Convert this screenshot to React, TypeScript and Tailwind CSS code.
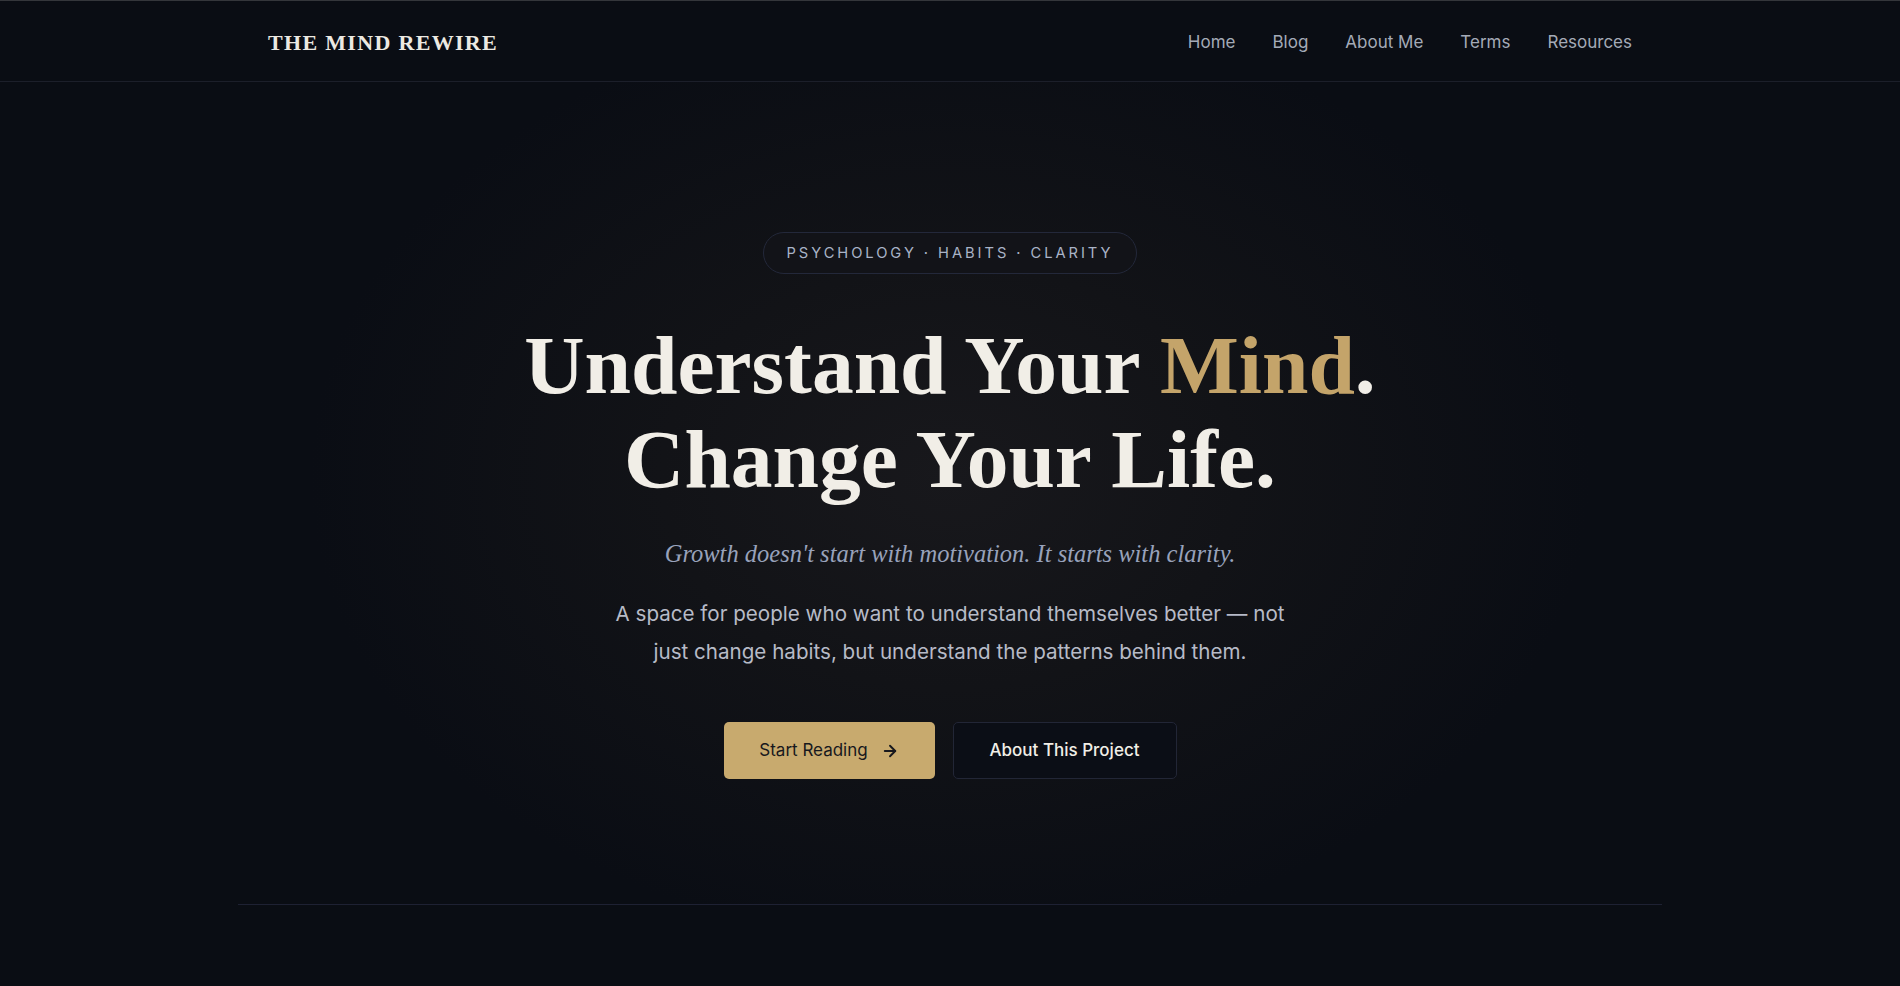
import { ArrowRight } from 'lucide-react';

const navLinks = ['Home', 'Blog', 'About Me', 'Terms', 'Resources'];

export default function App() {
  return (
    <div className="min-h-[986px] bg-[#0a0d14] border-t border-[#34363b] font-['Inter',sans-serif]">
      <header className="h-[81px] border-b border-[#1c1f2a] bg-[#0a0d14]">
        <div className="max-w-[1364px] mx-auto h-full flex items-center justify-between pt-[2px]">
          <span className="font-['Liberation_Serif',serif] font-bold text-[22px] tracking-[0.06em] text-[#ece9e2]">
            THE MIND REWIRE
          </span>
          <nav className="flex items-center gap-[37px] pt-[2px]">
            {navLinks.map((l) => (
              <a key={l} className="text-[17px] text-[#a4aab7]">
                {l}
              </a>
            ))}
          </nav>
        </div>
      </header>

      <section className="bg-[radial-gradient(ellipse_640px_470px_at_50%_48%,#18181c_0%,#121317_45%,#0a0d14_100%)] pt-[150px] pb-[125px] flex flex-col items-center">
        <div className="h-[42px] px-[23px] flex items-center rounded-full border border-[#23283a] bg-[#121318]">
          <span className="text-[14.7px] tracking-[0.2em] text-[#a9b3c7]">
            PSYCHOLOGY · HABITS · CLARITY
          </span>
        </div>

        <h1 className="mt-[44px] text-center font-['Liberation_Serif',serif] font-bold text-[83.5px] leading-[94px] text-[#f1eee7]">
          Understand Your <span className="text-[#c4a46a]">Mind</span>.
          <br />
          Change Your Life.
        </h1>

        <p className="mt-8 font-['Liberation_Serif',serif] italic text-[24.5px] leading-[32px] text-[#98a2bb]">
          Growth doesn't start with motivation. It starts with clarity.
        </p>

        <p className="mt-[25px] max-w-[760px] text-center text-[20.6px] leading-[38px] text-[#b7bbc7]">
          A space for people who want to understand themselves better — not
          <br />
          just change habits, but understand the patterns behind them.
        </p>

        <div className="mt-[51px] flex items-center gap-[18px]">
          <button className="h-[57px] w-[211px] rounded-[5px] bg-[#c8aa6e] flex items-center justify-center gap-[13px] text-[17px] text-[#17181d]">
            Start Reading
            <ArrowRight size={18} strokeWidth={2.5} />
          </button>
          <button className="h-[57px] w-[224px] rounded-[5px] border border-[#222636] bg-[#0b0e16] flex items-center justify-center text-[17px] font-medium text-[#f1eee7]">
            About This Project
          </button>
        </div>
      </section>

      <div className="max-w-[1424px] mx-auto border-t border-[#1e2133]" />
    </div>
  );
}
